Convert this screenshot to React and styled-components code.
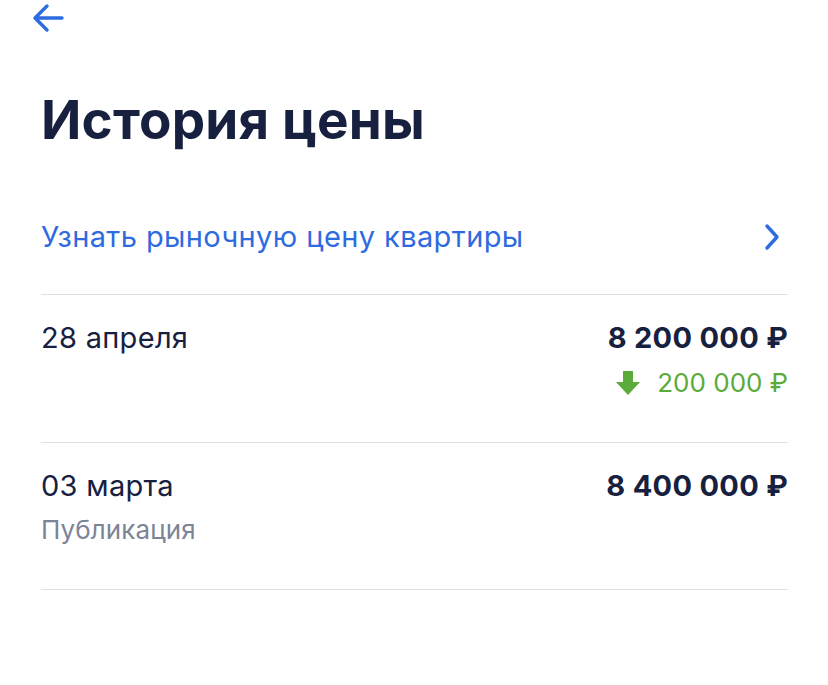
import React from "react";
import styled, { createGlobalStyle } from "styled-components";

const Global = createGlobalStyle`
  html, body { margin: 0; padding: 0; background: #fff; }
  body { font-family: Inter, "Noto Sans", sans-serif; -webkit-font-smoothing: antialiased; }
`;

const Page = styled.div`
  padding: 0 40px 0 41px;
  display: flex;
  flex-direction: column;
`;

const TopBar = styled.div`
  height: 38px;
  display: flex;
  align-items: center;
  margin-left: -10px;
`;

const BackButton = styled.button`
  border: 0;
  background: none;
  padding: 0;
  width: 34px;
  height: 34px;
  display: flex;
  align-items: center;
  justify-content: center;
  color: #2f6be0;
  margin-top: -2px;
`;

const Title = styled.h1`
  margin: 56px 0 0;
  font-size: 53px;
  line-height: 53px;
  font-weight: 700;
  color: #17213f;
  letter-spacing: 0.2px;
`;

const LinkRow = styled.a`
  margin-top: 72px;
  padding: 0 6px 39px 0;
  line-height: 36px;
  display: flex;
  align-items: center;
  justify-content: space-between;
  color: #2f6be0;
  font-size: 29px;
  letter-spacing: 0.4px;
  text-decoration: none;
  border-bottom: 1px solid #dedfe3;
`;

const Row = styled.div`
  display: flex;
  justify-content: space-between;
  padding: 26px 0 44px;
  border-bottom: 1px solid #dedfe3;
`;

const Col = styled.div`
  display: flex;
  flex-direction: column;
  align-items: ${(p) => (p.$right ? "flex-end" : "flex-start")};
  gap: ${(p) => p.$gap}px;
`;

const Text = styled.div`
  font-size: 29px;
  line-height: 34px;
  letter-spacing: 0.3px;
  color: #17213f;
  font-weight: ${(p) => (p.$bold ? 700 : 400)};
  white-space: nowrap;
`;

const Note = styled.div`
  font-size: 26px;
  line-height: 30px;
  letter-spacing: 0.1px;
  color: #7c8497;
  white-space: nowrap;
`;

const Change = styled.div`
  font-size: 26px;
  line-height: 30px;
  color: #5aab3a;
  display: flex;
  align-items: center;
  gap: 16px;
  white-space: nowrap;
`;

const Arrow = () => (
  <svg width="34" height="34" viewBox="0 0 34 34" fill="none">
    <path d="M31 17H5M16 5L4 17l12 12" stroke="currentColor" strokeWidth="3.4" strokeLinecap="round" strokeLinejoin="round" />
  </svg>
);

const Chevron = () => (
  <svg width="20" height="28" viewBox="0 0 20 28" fill="none">
    <path d="M5 3l10 11L5 25" stroke="#2f6be0" strokeWidth="3.4" strokeLinecap="round" strokeLinejoin="round" />
  </svg>
);

const DownArrow = () => (
  <svg width="26" height="26" viewBox="0 0 26 26">
    <path d="M8 1h10v11h7L13 25 1 12h7z" fill="#5aab3a" />
  </svg>
);

export default function App() {
  return (
    <>
      <Global />
      <Page>
        <TopBar>
          <BackButton aria-label="Назад"><Arrow /></BackButton>
        </TopBar>
        <Title>История цены</Title>
        <LinkRow href="#">
          <span>Узнать рыночную цену квартиры</span>
          <Chevron />
        </LinkRow>
        <Row>
          <Col $gap={12}>
            <Text>28 апреля</Text>
          </Col>
          <Col $right $gap={13}>
            <Text $bold>8 200 000 ₽</Text>
            <Change><DownArrow />200 000 ₽</Change>
          </Col>
        </Row>
        <Row>
          <Col $gap={12}>
            <Text>03 марта</Text>
            <Note>Публикация</Note>
          </Col>
          <Col $right $gap={13}>
            <Text $bold>8 400 000 ₽</Text>
          </Col>
        </Row>
      </Page>
    </>
  );
}
